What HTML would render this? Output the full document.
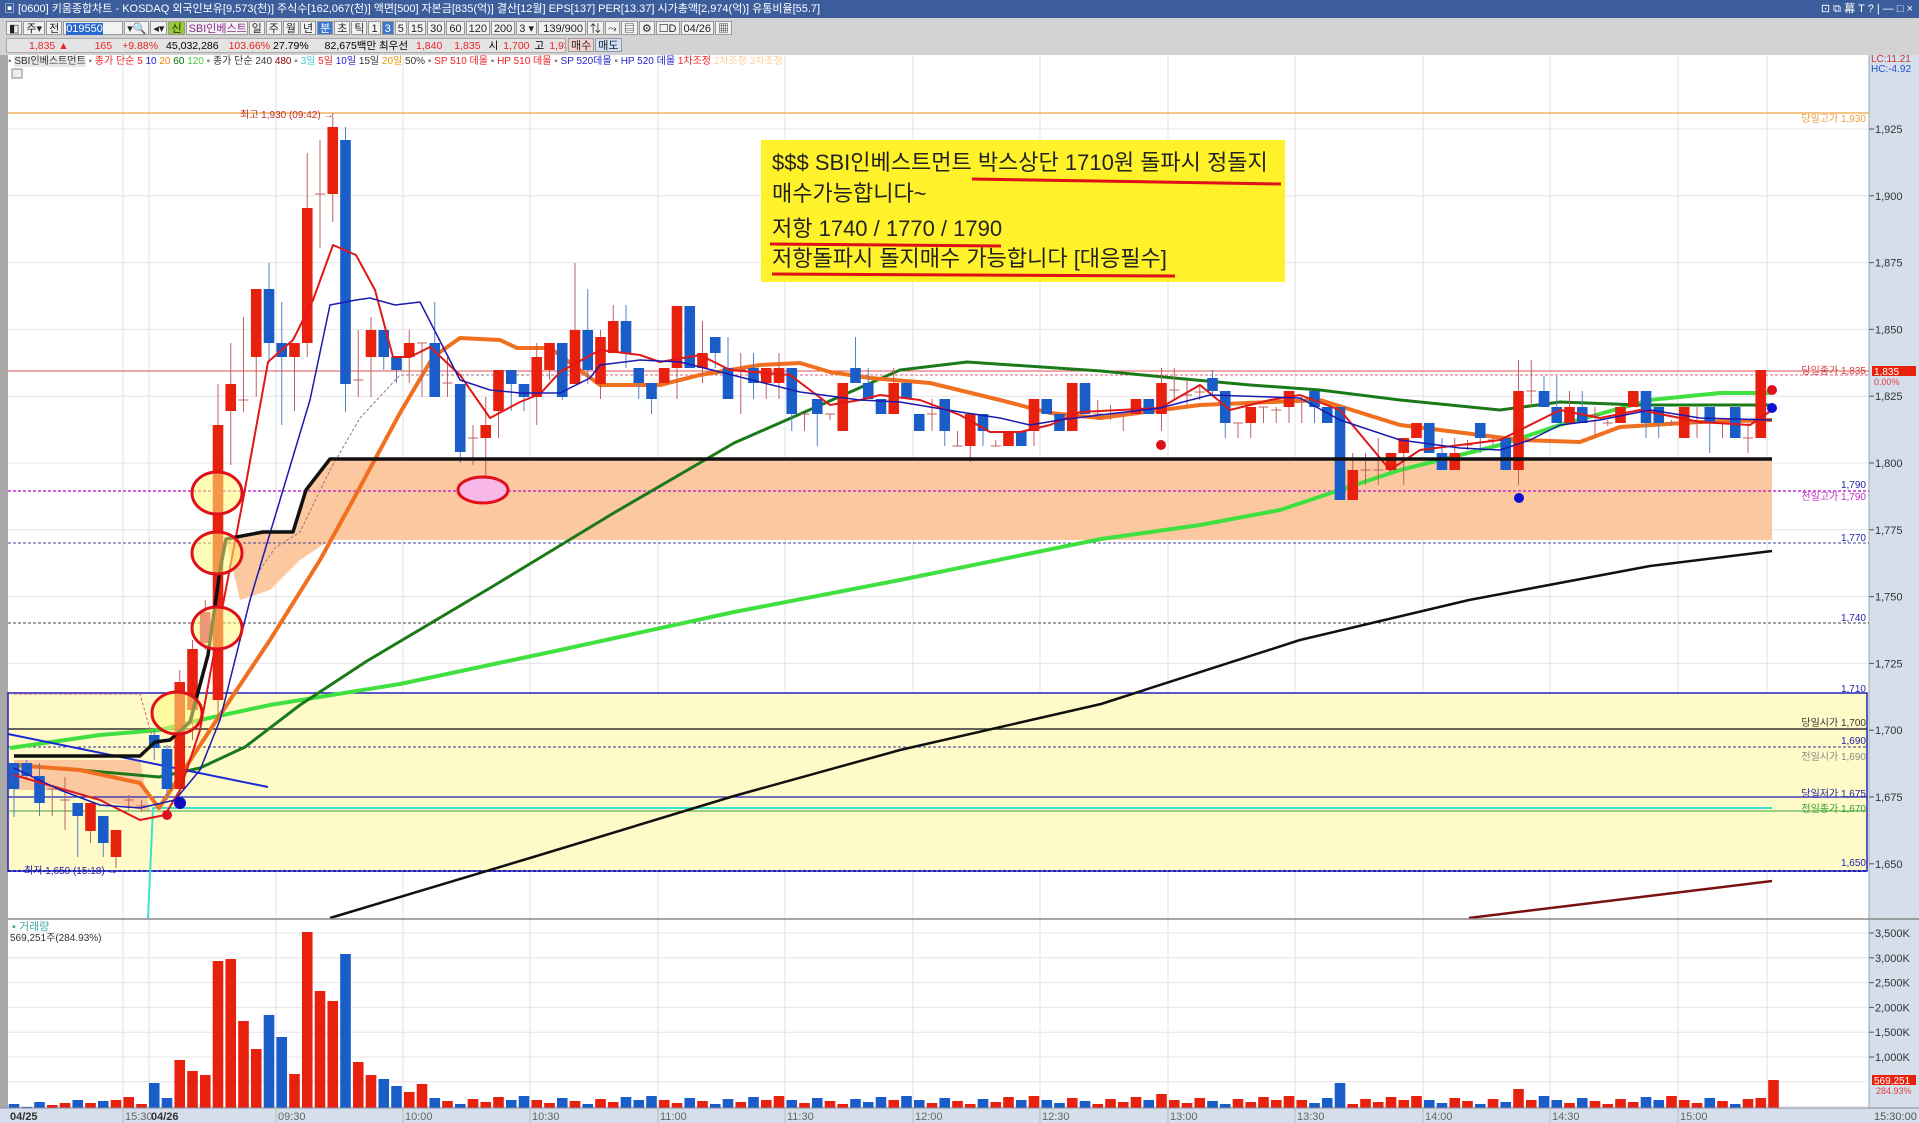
<!DOCTYPE html>
<html><head><meta charset="utf-8">
<style>
*{margin:0;padding:0;box-sizing:border-box}
html,body{width:1919px;height:1123px;overflow:hidden;background:#fff;font-family:"Liberation Sans","Noto Sans CJK KR",sans-serif}
#title{position:absolute;left:0;top:0;width:1919px;height:18px;background:#3c5d9c;color:#fff;font-size:11px;line-height:18px;padding-left:4px;white-space:nowrap}
#tb{position:absolute;left:0;top:18px;width:1919px;height:37px;background:#d3d3d3}
.row{position:absolute;left:6px;height:15px;font-size:11px;line-height:15px;white-space:nowrap}
.b{display:inline-block;border:1px solid #999;background:#f2f2f2;height:14px;padding:0 2px;margin-right:1px;vertical-align:top;color:#222}
#row2{background:#e4e4e4;font-size:10.5px;overflow:hidden}
#leg{position:absolute;left:8px;top:56px;font-size:10px;line-height:11px;white-space:nowrap;color:#333}
svg{position:absolute;left:0;top:0}
</style></head><body>
<div id="title">▣ [0600] 키움종합차트 - KOSDAQ 외국인보유[9,573(천)] 주식수[162,067(천)] 액면[500] 자본금[835(억)] 결산[12월] EPS[137] PER[13.37] 시가총액[2,974(억)] 유통비율[55.7]<span style="position:absolute;right:6px;top:0">⊡ ⧉ 幕 T ? | — □ ×</span></div>
<div id="tb">
<div class="row" style="top:3px"><span class="b">◧</span><span class="b">주▾</span><span class="b">전</span><span class="b" style="width:60px"><span style="background:#2a6ad0;color:#fff">019550</span></span><span class="b">▾🔍</span><span class="b">◂▾</span><span class="b" style="background:#9c3">신</span><span class="b" style="width:62px;color:#8a2a8a">SBI인베스트</span><span class="b">일</span><span class="b">주</span><span class="b">월</span><span class="b">년</span><span class="b" style="background:#3a78d0;color:#fff">분</span><span class="b">초</span><span class="b">틱</span><span class="b">1</span><span class="b" style="background:#3a78d0;color:#fff">3</span><span class="b">5</span><span class="b">15</span><span class="b">30</span><span class="b">60</span><span class="b">120</span><span class="b">200</span><span class="b">3 ▾</span><span class="b" style="width:48px;text-align:right">139/900</span><span class="b">⇅</span><span class="b">⤳</span><span class="b">▤</span><span class="b">⚙</span><span class="b">☐D</span><span class="b">04/26</span><span class="b">▦</span></div>
<div class="row" id="row2" style="top:20px;width:560px;border:1px solid #aaa"><span style="color:#e22;margin-left:22px">1,835 ▲</span><span style="color:#e22;margin-left:26px">165</span><span style="color:#e22;margin-left:10px">+9.88%</span><span style="margin-left:8px">45,032,286</span><span style="color:#e22;margin-left:10px">103.66%</span><span style="margin-left:3px">27.79%</span><span style="margin-left:16px">82,675백만 최우선</span><span style="color:#e22;margin-left:8px">1,840</span><span style="color:#e22;margin-left:12px">1,835</span><span style="margin-left:8px">시</span><span style="color:#e22;margin-left:5px">1,700</span><span style="margin-left:5px">고</span><span style="color:#e22;margin-left:5px">1,930</span><span style="margin-left:5px">저</span><span style="color:#e22;margin-left:5px">1,675</span></div>
<div class="row" style="top:20px;left:568px"><span class="b" style="background:#f7d0d0">매수</span><span class="b" style="background:#cfe0f7">매도</span></div>
</div>
<svg id="s" width="1919" height="1123" viewBox="0 0 1919 1123"></svg>
<div id="leg"><span style="color:#888">▪</span> <span style="background:#e8e8e8">SBI인베스트먼트</span> <span style="color:#888">▪</span> <span style="color:#e22">종가 단순 5</span> <span style="color:#22c">10</span> <span style="color:#e80">20</span> <span style="color:#070">60</span> <span style="color:#4c4">120</span> <span style="color:#888">▪</span> 종가 단순 240 <span style="color:#800">480</span> <span style="color:#888">▪</span> <span style="color:#4cd">3일</span> <span style="color:#e22">5일</span> <span style="color:#22c">10일</span> <span style="color:#333">15일</span> <span style="color:#e90">20일</span> 50% <span style="color:#888">▪</span> <span style="color:#e22">SP 510 데몰</span> <span style="color:#888">▪</span> <span style="color:#e22">HP 510 데몰</span> <span style="color:#888">▪</span> <span style="color:#22c">SP 520데몰</span> <span style="color:#888">▪</span> <span style="color:#22c">HP 520 데몰</span> <span style="color:#e22">1차조정</span> <span style="color:#fc9">2차조정</span> <span style="color:#fc9">3차조정</span></div>
<script>
var S=[];function a(s){S.push(s)}
var F='font-family="Liberation Sans,Noto Sans CJK KR,sans-serif"';
function Y(p){return 129+(1925-p)*2.672}
function X(i){return 14+i*12.75}
function pl(pts,c,w,extra){a('<polyline fill="none" stroke="'+c+'" stroke-width="'+w+'" '+(extra||'')+' stroke-linejoin="round" points="'+pts.map(function(p){return p.join(',')}).join(' ')+'"/>')}
a('<rect x="0" y="55" width="8" height="1068" fill="#a9a9a9"/>');
a('<rect x="1869" y="55" width="50" height="1068" fill="#d5dfec"/>');
a('<line x1="1869" y1="55" x2="1869" y2="1123" stroke="#9aa" />');
a('<rect x="12" y="69" width="10" height="9" fill="#eee" stroke="#888"/>');
for(var p=1925;p>=1650;p-=25){a('<line x1="8" x2="1869" y1="'+Y(p)+'" y2="'+Y(p)+'" stroke="#e4e4ea"/>');}
var gx=[123,149,276,403,530,658,785,913,1040,1168,1295,1423,1550,1678,1767];
gx.forEach(function(x){a('<line x1="'+x+'" x2="'+x+'" y1="55" y2="1108" stroke="#e0e0e6"/>')});
a('<rect x="8" y="693" width="1859" height="178" fill="#fefbc9" stroke="#2222bb" stroke-width="1.5"/>');
a('<rect x="330" y="459" width="1442" height="81" fill="#fcc8a0"/>');
a('<polygon fill="#fcc8a0" points="226,539 263,532 293,532 306,490 330,459 330,540 300,560 270,590 240,600"/>');
a('<polygon fill="#fcc8a0" points="14,760 140,760 150,812 100,800 60,790 14,790"/>');
a('<line x1="8" x2="1869" y1="113" y2="113" stroke="#f0b060" stroke-width="1.5"/>');
a('<line x1="8" x2="1869" y1="371" y2="371" stroke="#e05050"/>');
a('<line x1="600" x2="1869" y1="375" y2="375" stroke="#e06080" stroke-dasharray="3,2"/>');
a('<line x1="8" x2="1869" y1="491" y2="491" stroke="#c030d0" stroke-width="1.5" stroke-dasharray="3,2"/>');
a('<line x1="8" x2="1869" y1="543" y2="543" stroke="#444499" stroke-dasharray="3,2"/>');
a('<line x1="8" x2="1869" y1="623" y2="623" stroke="#444" stroke-dasharray="3,2"/>');
a('<line x1="8" x2="1867" y1="729" y2="729" stroke="#333" stroke-width="1.5"/>');
a('<line x1="8" x2="1867" y1="747" y2="747" stroke="#333399" stroke-dasharray="3,2"/>');
a('<line x1="8" x2="1867" y1="797" y2="797" stroke="#2222bb" stroke-width="1.2"/>');
a('<line x1="8" x2="1867" y1="811" y2="811" stroke="#40a040"/>');
a('<line x1="8" x2="1867" y1="871" y2="871" stroke="#2222bb" stroke-width="2" stroke-dasharray="3,2"/>');
pl([[148,918],[153,808],[1772,808]],'#40e0d0',2);
pl([[330,918],[530,858],[734,796],[900,750],[1101,704],[1300,640],[1469,600],[1650,566],[1772,551]],'#111',2.5);
pl([[1469,918],[1600,902],[1772,881]],'#7a1010',2.5);
pl([[10,748],[100,735],[160,730],[200,720],[270,705],[400,684],[560,650],[734,612],[900,580],[1101,539],[1200,525],[1280,510],[1340,490],[1400,470],[1500,445],[1560,425],[1650,400],[1720,393],[1772,393]],'#40e040',4);
pl([[10,765],[80,770],[159,777],[200,768],[245,747],[300,705],[367,661],[490,588],[612,514],[734,443],[857,389],[900,370],[967,362],[1101,371],[1174,378],[1250,385],[1320,390],[1400,400],[1500,410],[1560,402],[1640,405],[1772,405]],'#1a7a1a',3);
pl([[14,765],[80,770],[140,783],[159,808],[210,730],[270,640],[320,560],[353,500],[400,413],[433,357],[460,338],[500,340],[517,348],[550,348],[600,385],[660,385],[700,375],[760,365],[800,363],[830,372],[870,378],[930,383],[1000,400],[1050,413],[1100,418],[1200,405],[1320,400],[1400,425],[1480,435],[1520,440],[1580,442],[1620,427],[1700,422],[1772,420]],'#f07020',4);
pl([[8,734],[268,787]],'#1a2ad0',2);
pl([[14,694],[140,694],[153,740]],'#e06080',1,'stroke-dasharray="3,2"');
pl([[260,570],[275,548],[300,532],[330,470],[360,418],[400,375],[600,375]],'#a07080',1,'stroke-dasharray="3,2"');
var C=[[0,'b',763,789,763,817],[1,'b',763,776,760,780],[2,'b',776,803,763,816],[3,'d',789,789,789,816],[4,'d',800,800,777,830],[5,'b',803,816,803,857],[6,'r',803,831,803,843],[7,'b',816,843,816,857],[8,'r',830,857,830,868],[9,'d',800,800,795,810],[10,'d',806,806,800,812],
[11,'b',735,748,730,760],[12,'b',749,789,745,800],[13,'r',682,789,670,795],[14,'r',649,710,640,740],[15,'m',612,643,600,650],[16,'r',425,700,384,720],[17,'r',384,411,343,465],[18,'d',400,400,317,412],[19,'r',289,357,289,397],[20,'b',289,343,263,363],[21,'b',343,357,302,425],[22,'r',343,357,343,411],[23,'r',208,343,153,357],[24,'d',194,194,140,248],[25,'r',127,194,113,222],[26,'b',140,384,127,412],[27,'d',380,380,330,397],[28,'r',330,357,317,397],[29,'b',330,357,330,370],[30,'b',357,370,357,383],[31,'r',343,357,330,383],[32,'d',343,343,343,397],[33,'b',343,397,302,397],[34,'d',383,383,357,397],[35,'b',384,452,384,463],[36,'d',438,438,425,465],[37,'r',425,438,397,493],[38,'r',370,411,370,438],[39,'b',370,384,370,411],[40,'b',384,397,384,411],[41,'r',357,397,343,425],[42,'r',343,370,343,380],[43,'b',343,397,343,400],[44,'r',330,384,263,384],[45,'b',330,370,289,384],[46,'r',337,384,330,399],
[47,'r',321,353,305,353],[48,'b',321,353,305,368],[49,'b',368,383,368,399],[50,'b',383,399,383,414],[51,'r',368,383,368,383],[52,'r',306,368,306,399],[53,'b',306,368,306,368],[54,'r',353,368,321,383],[55,'b',337,353,337,368],[56,'b',368,399,337,399],[57,'d',370,370,353,414],[58,'b',368,383,353,399],[59,'r',368,383,368,399],[60,'r',368,383,353,399],[61,'b',368,414,368,431],[62,'d',414,414,414,431],[63,'b',399,414,399,446],[64,'d',414,414,414,420],[65,'r',383,431,383,431],[66,'b',368,383,337,383],[67,'b',383,399,368,399],[68,'b',399,414,399,414],[69,'r',383,414,368,414],[70,'b',383,399,383,399],[71,'b',414,431,414,431],[72,'d',414,414,399,431],[73,'b',399,431,399,446],[74,'d',446,446,431,446],[75,'r',414,446,414,462],[76,'b',414,431,414,446],[77,'d',446,446,440,446],[78,'r',431,446,431,446],[79,'b',431,446,431,446],[80,'r',399,431,399,446],[81,'b',399,414,399,414],[82,'b',414,431,414,431],[83,'r',383,431,383,431],[84,'b',383,414,383,414],[85,'d',414,414,400,420],[86,'d',414,414,405,420],[87,'d',414,414,414,431],[88,'r',399,414,399,414],[89,'b',399,414,399,414],[90,'r',383,414,368,431],[91,'d',390,390,368,400],[92,'d',395,395,380,405],[93,'d',392,392,385,400],
[94,'b',378,391,370,395],[95,'b',391,423,391,438],[96,'d',423,423,423,438],[97,'r',407,423,407,438],[98,'d',407,407,407,423],[99,'d',410,410,407,423],[100,'r',391,407,391,423],[101,'d',400,400,395,423],[102,'b',391,407,391,423],[103,'b',407,423,407,423],[104,'b',407,500,407,500],[105,'r',470,500,453,500],[106,'d',470,470,453,485],[107,'d',470,470,438,485],[108,'r',453,470,453,470],[109,'r',438,453,438,485],[110,'r',423,438,423,438],[111,'b',423,453,423,453],[112,'b',453,470,438,470],[113,'r',453,470,438,470],[114,'d',445,445,440,450],[115,'b',423,438,423,453],[116,'d',440,440,435,445],[117,'b',438,470,438,470],[118,'r',391,470,360,485],[119,'d',391,391,360,407],[120,'b',391,407,376,407],[121,'b',407,423,376,423],[122,'r',407,423,391,423],[123,'b',407,423,391,423],[124,'d',415,415,407,438],[125,'d',423,423,420,426],[126,'r',407,423,407,423],[127,'r',391,407,391,407],[128,'b',391,423,391,438],[129,'b',407,423,407,438],[130,'d',423,423,420,426],[131,'r',407,438,407,438],[132,'d',423,423,407,438],[133,'b',407,423,407,453],[134,'d',423,423,423,438],[135,'b',407,438,407,438],[136,'d',438,438,423,453],[137,'r',370,438,370,438]];
var col={r:'#e8200e',b:'#1a5cc8',d:'#c06060',m:'#e0207a'};
C.forEach(function(c){var x=X(c[0]);var cl=col[c[1]];
a('<line x1="'+x+'" x2="'+x+'" y1="'+c[4]+'" y2="'+c[5]+'" stroke="'+(c[1]=='b'?'#5a80c0':'#c06060')+'" stroke-width="1"/>');
if(c[1]=='d'){a('<line x1="'+(x-5)+'" x2="'+(x+5)+'" y1="'+c[2]+'" y2="'+c[2]+'" stroke="#c06060"/>')}
else a('<rect x="'+(x-5.3)+'" y="'+c[2]+'" width="10.6" height="'+Math.max(2,c[3]-c[2])+'" fill="'+cl+'"/>');});
pl([[14,775],[100,800],[140,820],[165,815],[180,790],[200,730],[220,620],[243,500],[268,362],[293,340],[313,300],[333,245],[356,255],[375,290],[393,357],[410,357],[430,347],[460,375],[490,418],[520,402],[540,394],[560,372],[600,350],[640,355],[660,362],[700,355],[730,370],[790,375],[830,405],[860,400],[880,395],[920,400],[960,415],[990,432],[1020,432],[1050,425],[1080,412],[1120,410],[1160,408],[1200,385],[1230,410],[1270,400],[1300,395],[1340,410],[1390,470],[1420,450],[1460,445],[1500,440],[1520,430],[1560,410],[1600,418],[1640,410],[1700,422],[1750,425],[1772,410]],'#e01818',2);
pl([[14,768],[60,790],[100,805],[140,808],[175,800],[200,770],[220,720],[250,600],[280,500],[310,400],[330,305],[356,300],[370,298],[395,305],[420,302],[460,380],[490,390],[520,393],[560,393],[590,378],[600,365],[640,360],[680,362],[720,372],[800,392],[860,400],[900,402],[960,412],[1000,418],[1030,425],[1060,420],[1100,415],[1160,408],[1210,395],[1300,398],[1340,420],[1400,440],[1460,448],[1500,450],[1530,440],[1560,425],[1600,420],[1650,410],[1700,418],[1772,420]],'#1a1ab0',1.5);
pl([[14,756],[140,756],[155,742],[170,740],[190,722],[208,655],[220,570],[226,539],[263,532],[293,532],[306,490],[330,459],[1772,459]],'#111',3.5);
[[177,713],[217,628],[217,553],[217,493]].forEach(function(e){a('<ellipse cx="'+e[0]+'" cy="'+e[1]+'" rx="25" ry="21" fill="rgba(255,250,120,0.55)" stroke="#e0101a" stroke-width="3"/>')});
a('<ellipse cx="483" cy="490" rx="25" ry="13" fill="#f7b8e8" stroke="#e0101a" stroke-width="3"/>');
a('<circle cx="167" cy="815" r="5" fill="#e0101a"/><circle cx="180" cy="803" r="6" fill="#1010c0"/>');
a('<circle cx="1161" cy="445" r="5" fill="#e0101a"/><circle cx="1519" cy="498" r="5" fill="#1010d0"/>');
a('<circle cx="1772" cy="390" r="5" fill="#e0101a"/><circle cx="1772" cy="408" r="5" fill="#1010d0"/>');
a('<text x="240" y="118" font-size="10" fill="#c03030" '+F+'>최고 1,930 (09:42) →</text>');
a('<text x="24" y="874" font-size="10" fill="#2222aa" '+F+'>최저 1,650 (15:18) →</text>');
a('<rect x="761" y="140" width="524" height="142" fill="#fff22a"/>');
var ts='font-size="22" fill="#222" '+F;
a('<text x="772" y="170" '+ts+'>$$$ SBI인베스트먼트 박스상단 1710원 돌파시 정돌지</text>');
a('<text x="772" y="201" '+ts+'>매수가능합니다~</text>');
a('<text x="772" y="236" '+ts+'>저항 1740 / 1770 / 1790</text>');
a('<text x="772" y="266" '+ts+'>저항돌파시 돌지매수 가능합니다 [대응필수]</text>');
[[972,179,1281,184],[770,244,1001,246],[772,274,1175,276]].forEach(function(u){a('<path d="M'+u[0]+' '+u[1]+' L'+u[2]+' '+u[3]+'" stroke="#e0101a" stroke-width="3" fill="none"/>')});
var ax='font-size="11" fill="#333" '+F;
for(var p=1925;p>=1650;p-=25){var y=Y(p);a('<line x1="1869" x2="1874" y1="'+y+'" y2="'+y+'" stroke="#555"/><text x="1875" y="'+(y+4)+'" '+ax+'>'+(p+'').replace(/(\d)(\d{3})$/,'$1,$2')+'</text>');}
a('<text x="1871" y="62" font-size="10" fill="#d03030" '+F+'>LC:11.21</text><text x="1871" y="72" font-size="10" fill="#2050d0" '+F+'>HC:-4.92</text>');
a('<rect x="1872" y="366" width="44" height="10" fill="#e8200e"/><text x="1874" y="375" font-size="10" fill="#fff" '+F+'>1,835</text><text x="1874" y="385" font-size="9" fill="#e04040" '+F+'>0.00%</text>');
function rl(t,y,c){a('<text x="1866" y="'+y+'" font-size="10" text-anchor="end" fill="'+c+'" '+F+'>'+t+'</text>')}
rl('당일고가 1,930',122,'#e8a040');rl('당일종가 1,835',374,'#d04040');rl('1,790',488,'#2222aa');rl('전일고가 1,790',500,'#c030c0');rl('1,770',541,'#2222aa');rl('1,740',621,'#2222aa');rl('1,710',692,'#2222aa');rl('당일시가 1,700',726,'#333');rl('1,690',744,'#2222aa');rl('전일시가 1,690',760,'#888');rl('당일저가 1,675',797,'#2222aa');rl('전일종가 1,670',812,'#30a030');rl('1,650',866,'#2222aa');
a('<line x1="8" x2="1919" y1="919" y2="919" stroke="#888" stroke-width="1.5"/>');
for(var k=0;k<8;k++){var y=933+k*24.8;a('<line x1="8" x2="1869" y1="'+y+'" y2="'+y+'" stroke="#e4e4ea"/>');}
['3,500K','3,000K','2,500K','2,000K','1,500K','1,000K'].forEach(function(t,k){var y=933+k*24.8;a('<line x1="1869" x2="1874" y1="'+y+'" y2="'+y+'" stroke="#555"/><text x="1875" y="'+(y+4)+'" '+ax+'>'+t+'</text>')});
a('<rect x="1872" y="1075" width="44" height="10" fill="#e8200e"/><text x="1874" y="1084" font-size="10" fill="#fff" '+F+'>569,251</text><text x="1876" y="1094" font-size="9" fill="#e04040" '+F+'>284.93%</text>');
a('<text x="12" y="930" font-size="11" fill="#4aa" '+F+'>▪ 거래량</text><text x="10" y="941" font-size="10" fill="#333" '+F+'>569,251주(284.93%)</text>');
var V=[1104,1107,1102,1105,1103,1100,1103,1101,1100,1097,1104,1083,1098,1060,1071,1075,961,959,1021,1049,1015,1037,1074,932,991,1001,954,1062,1075,1079,1086,1092,1084];
var small=[1096,1100,1103,1098,1101,1104,1099,1102,1097,1100];
for(var i=0;i<139;i++){var t=i<V.length?V[i]:small[i%10];if(i==104)t=1083;if(i==118)t=1089;if(i==138)t=1080;if(i==137)t=1098;if(i==90)t=1094;
var c=C[Math.min(i,137)];var cl=(c&&c[1]=='b')?'#1a5cc8':'#e8200e';if(i==138)cl='#e8200e';
a('<rect x="'+(X(i)-5.3)+'" y="'+t+'" width="10.6" height="'+(1108-t)+'" fill="'+cl+'"/>');}
a('<rect x="0" y="1108" width="1919" height="15" fill="#d5dfec"/><line x1="0" x2="1919" y1="1108" y2="1108" stroke="#889"/>');
a('<text x="10" y="1120" font-size="11" font-weight="bold" fill="#333" '+F+'>04/25</text><text x="151" y="1120" font-size="11" font-weight="bold" fill="#333" '+F+'>04/26</text><text x="1874" y="1120" font-size="11" fill="#555" '+F+'>15:30:00</text>');
[['15:30',123],['09:30',276],['10:00',403],['10:30',530],['11:00',658],['11:30',785],['12:00',913],['12:30',1040],['13:00',1168],['13:30',1295],['14:00',1423],['14:30',1550],['15:00',1678]].forEach(function(t){a('<line x1="'+t[1]+'" x2="'+t[1]+'" y1="1108" y2="1123" stroke="#bbb"/><text x="'+(t[1]+2)+'" y="1120" font-size="11" fill="#666" '+F+'>'+t[0]+'</text>')});
document.getElementById('s').innerHTML=S.join('');
</script>
</body></html>
